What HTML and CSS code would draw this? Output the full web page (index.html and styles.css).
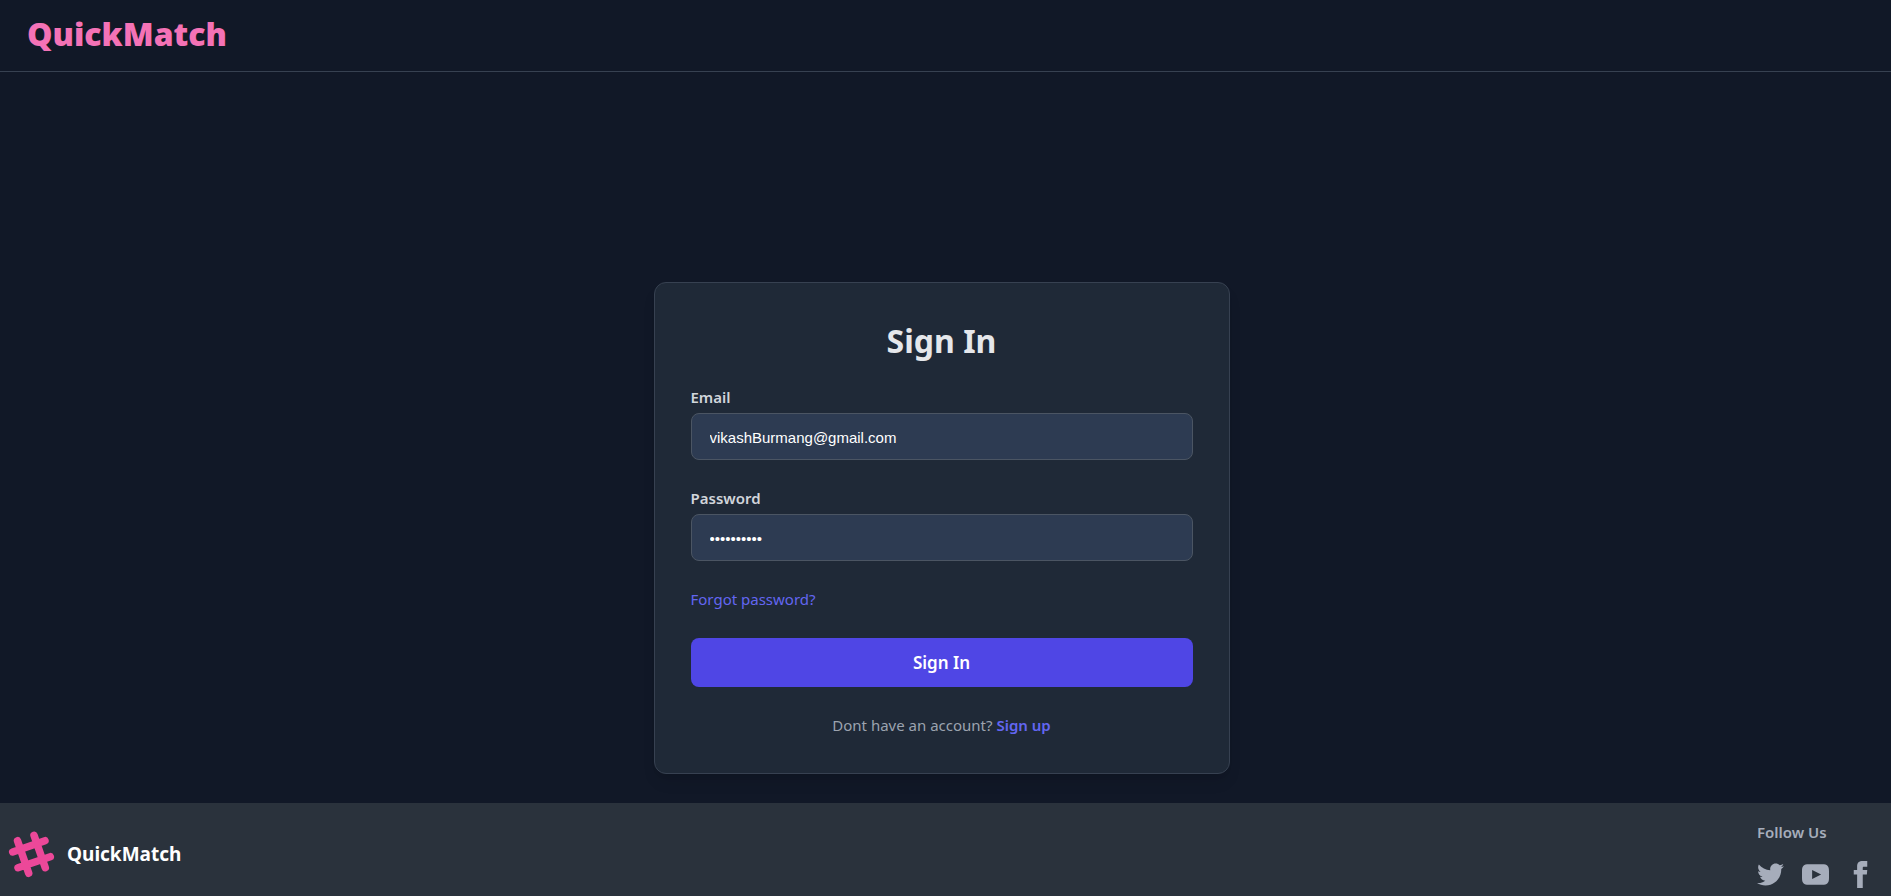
FILE: index.html
```html
<!DOCTYPE html>
<html lang="en">
<head>
<meta charset="utf-8">
<title>QuickMatch</title>
<link rel="stylesheet" href="styles.css">
</head>
<body>
<header class="header"><a class="wordmark" href="#">QuickMatch</a></header>
<main class="main">
  <form class="card">
    <h1 class="title">Sign In</h1>
    <div class="field">
      <label class="label" for="email">Email</label>
      <input class="input" id="email" type="email" value="vikashBurmang@gmail.com">
    </div>
    <div class="field">
      <label class="label" for="password">Password</label>
      <input class="input" id="password" type="password" value="abcdefghij">
    </div>
    <a class="forgot" href="#">Forgot password?</a>
    <button class="submit" type="button">Sign In</button>
    <p class="switch">Dont have an account? <a class="signup" href="#">Sign up</a></p>
  </form>
</main>
<footer class="footer">
  <div class="brand">
    <svg class="brand-icon" viewBox="0 0 48 48" fill="none" stroke="#ec4899" stroke-width="7.500" stroke-linecap="round" aria-hidden="true">
      <path d="M9.500 10.700 20.700 43.300M26 5.300 37.300 37.700M4.700 22 37 10.700M10 37.700 42.300 26.700"/>
    </svg>
    <span class="brand-name">QuickMatch</span>
  </div>
  <nav class="social" aria-label="Social links">
    <h2 class="social-title">Follow Us</h2>
    <div class="social-links">
      <a class="social-link" href="#" aria-label="Twitter"><svg class="social-icon" viewBox="0 0 24 24" fill="currentColor"><path d="M24 4.557c-.883.392-1.832.656-2.828.775 1.017-.609 1.798-1.574 2.165-2.724-.951.564-2.005.974-3.127 1.195-.897-.957-2.178-1.555-3.594-1.555-3.179 0-5.515 2.966-4.797 6.045-4.091-.205-7.719-2.165-10.148-5.144-1.29 2.213-.669 5.108 1.523 6.574-.806-.026-1.566-.247-2.229-.616-.054 2.281 1.581 4.415 3.949 4.890-.693.188-1.452.232-2.224.084.626 1.956 2.444 3.379 4.600 3.419-2.070 1.623-4.678 2.348-7.290 2.040 2.179 1.397 4.768 2.212 7.548 2.212 9.142 0 14.307-7.721 13.995-14.646.962-.695 1.797-1.562 2.457-2.549z"/></svg></a>
      <a class="social-link" href="#" aria-label="YouTube"><svg class="social-icon" viewBox="0 0 24 24" fill="currentColor" fill-rule="evenodd"><path d="M6 2.800h12c4.500 0 6 1.500 6 6v6.400c0 4.500-1.500 6-6 6H6c-4.500 0-6-1.500-6-6V8.800c0-4.500 1.500-6 6-6zM9 8v8l8-4z"/></svg></a>
      <a class="social-link" href="#" aria-label="Facebook"><svg class="social-icon" viewBox="0 0 24 24" fill="currentColor"><path d="M9 8h-3v4h3v12h5v-12h3.642l.358-4h-4v-1.667c0-.955.192-1.333 1.115-1.333h2.885v-5h-3.808c-3.596 0-5.192 1.583-5.192 4.615v3.385z"/></svg></a>
    </div>
  </nav>
</footer>
</body>
</html>
```
FILE: styles.css
```css
* { box-sizing: border-box; margin: 0; }
body {
  min-height: 100vh;
  display: flex;
  flex-direction: column;
  background: #111827;
  color: #fff;
  font: 16px/24px "Noto Sans", sans-serif;
}
a { text-decoration: none; }
.header { padding: 14px 27px 18px; border-bottom: 1px solid #374151; }
.wordmark { display: block; color: #f472b6; font: 800 32px/39px "Open Sans", "Noto Sans", sans-serif; }
.main { flex: 1; display: flex; align-items: flex-end; justify-content: center; padding: 32px 8px 29px 0; }
.card {
  width: 100%;
  max-width: 576px;
  padding: 36px;
  display: flex;
  flex-direction: column;
  background: #1f2937;
  border: 1px solid #374151;
  border-radius: 12px;
  box-shadow: 0 10px 15px -3px rgba(0, 0, 0, .1), 0 4px 6px -4px rgba(0, 0, 0, .1);
}
.title { color: #e5e7eb; font-size: 32px; line-height: 44px; text-align: center; margin-bottom: 22px; }
.field { display: flex; flex-direction: column; margin-bottom: 26px; }
.label { color: #d1d5db; font-size: 15px; line-height: 24px; font-weight: 600; margin-bottom: 4px; }
.input {
  width: 100%;
  height: 47px;
  padding: 2px 18px 0;
  background: #2d3b52;
  border: 1px solid #4b5563;
  border-radius: 8px;
  color: #fff;
  font: 15px "Liberation Sans", sans-serif;
}
.forgot { align-self: flex-start; color: #6366f1; font-size: 15px; margin-bottom: 27px; }
.submit {
  height: 49px;
  border: 0;
  border-radius: 8px;
  background: #4f46e5;
  color: #fff;
  font: 600 17px "Noto Sans", sans-serif;
}
.switch { color: #9ca3af; font-size: 15px; text-align: center; margin-top: 26px; }
.signup { color: #6366f1; font-weight: 600; }
.footer { display: flex; justify-content: space-between; align-items: center; padding: 17px 17px 8px 8px; background: #2a323c; }
.brand { display: flex; align-items: center; gap: 11px; }
.brand-icon { width: 48px; height: 48px; }
.brand-name { font-size: 19px; font-weight: 700; }
.social-title { color: #a6adbb; font-size: 15px; line-height: 24px; font-weight: 600; }
.social-links { display: flex; gap: 18px; margin-top: 17px; }
.social-link { color: #a6adbb; display: block; }
.social-icon { display: block; width: 27px; height: 27px; }
```
